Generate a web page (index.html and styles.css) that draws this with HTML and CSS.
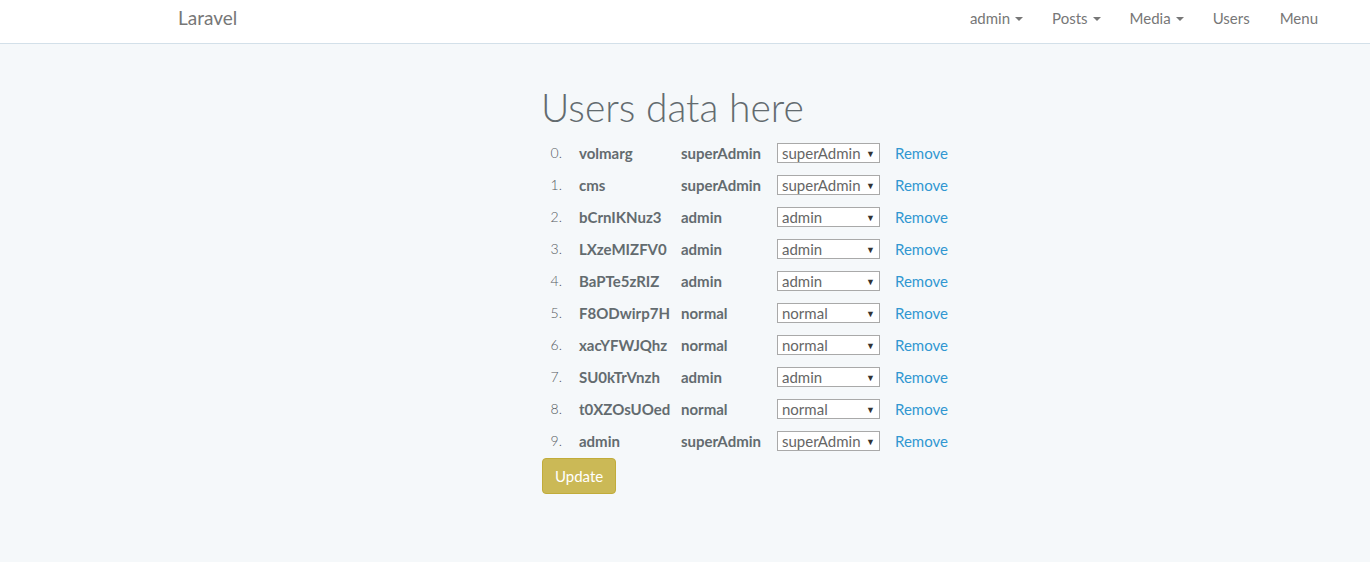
FILE: index.html
```html
<!DOCTYPE html>
<html lang="en">
<head>
<meta charset="utf-8">
<title>Users</title>
<link rel="stylesheet" href="styles.css">
</head>
<body>
<nav class="navbar">
  <div class="nav-inner">
    <a class="brand" href="#">Laravel</a>
    <ul class="nav-links">
      <li><a href="#">admin <span class="caret"></span></a></li>
      <li><a href="#">Posts <span class="caret"></span></a></li>
      <li><a href="#">Media <span class="caret"></span></a></li>
      <li><a href="#">Users</a></li>
      <li><a href="#">Menu</a></li>
    </ul>
  </div>
</nav>
<main class="content">
  <h1 class="title">Users data here</h1>
  <ol class="users">
    <li class="row"><span class="num">0.</span><span class="name">volmarg</span><span class="role">superAdmin</span><span class="sel"><span class="sel-text">superAdmin</span><span class="arrow">▼</span></span><a class="remove" href="#">Remove</a></li>
    <li class="row"><span class="num">1.</span><span class="name">cms</span><span class="role">superAdmin</span><span class="sel"><span class="sel-text">superAdmin</span><span class="arrow">▼</span></span><a class="remove" href="#">Remove</a></li>
    <li class="row"><span class="num">2.</span><span class="name">bCrnIKNuz3</span><span class="role">admin</span><span class="sel"><span class="sel-text">admin</span><span class="arrow">▼</span></span><a class="remove" href="#">Remove</a></li>
    <li class="row"><span class="num">3.</span><span class="name">LXzeMIZFV0</span><span class="role">admin</span><span class="sel"><span class="sel-text">admin</span><span class="arrow">▼</span></span><a class="remove" href="#">Remove</a></li>
    <li class="row"><span class="num">4.</span><span class="name">BaPTe5zRIZ</span><span class="role">admin</span><span class="sel"><span class="sel-text">admin</span><span class="arrow">▼</span></span><a class="remove" href="#">Remove</a></li>
    <li class="row"><span class="num">5.</span><span class="name">F8ODwirp7H</span><span class="role">normal</span><span class="sel"><span class="sel-text">normal</span><span class="arrow">▼</span></span><a class="remove" href="#">Remove</a></li>
    <li class="row"><span class="num">6.</span><span class="name">xacYFWJQhz</span><span class="role">normal</span><span class="sel"><span class="sel-text">normal</span><span class="arrow">▼</span></span><a class="remove" href="#">Remove</a></li>
    <li class="row"><span class="num">7.</span><span class="name">SU0kTrVnzh</span><span class="role">admin</span><span class="sel"><span class="sel-text">admin</span><span class="arrow">▼</span></span><a class="remove" href="#">Remove</a></li>
    <li class="row"><span class="num">8.</span><span class="name">t0XZOsUOed</span><span class="role">normal</span><span class="sel"><span class="sel-text">normal</span><span class="arrow">▼</span></span><a class="remove" href="#">Remove</a></li>
    <li class="row"><span class="num">9.</span><span class="name">admin</span><span class="role">superAdmin</span><span class="sel"><span class="sel-text">superAdmin</span><span class="arrow">▼</span></span><a class="remove" href="#">Remove</a></li>
  </ol>
  <button class="btn-update" type="button">Update</button>
</main>
</body>
</html>
```
FILE: styles.css
```css
* { box-sizing: border-box; }
html, body { margin: 0; padding: 0; }
body {
  background: #f5f8fa;
  color: #636b6f;
  font-family: Lato, "Open Sans", sans-serif;
  font-size: 15px;
  font-weight: 300;
  line-height: 1.6;
  height: 562px;
  overflow: hidden;
}
a { text-decoration: none; }

.navbar {
  background: #fff;
  border-bottom: 1px solid #d3e0e9;
  height: 44px;
}
.nav-inner {
  margin-left: 178px;
  width: 1140px;
  height: 43px;
  display: flex;
  align-items: center;
  justify-content: space-between;
}
.brand {
  color: #777;
  font-size: 19px;
  font-weight: 400;
  line-height: 1;
  padding-bottom: 8px;
}
.nav-links {
  list-style: none;
  margin: 0 -15px 0 0;
  padding: 0;
  display: flex;
  height: 100%;
}
.nav-links li a {
  display: flex;
  align-items: center;
  height: 100%;
  padding: 0 15px 8px;
  color: #777;
  font-size: 15px;
  font-weight: 400;
}
.caret {
  display: inline-block;
  width: 0;
  height: 0;
  margin-left: 5px;
  margin-right: -1px;
  margin-top: 2px;
  border-top: 4px solid #777;
  border-left: 4px solid transparent;
  border-right: 4px solid transparent;
}

.content {
  margin-left: 539px;
  width: 460px;
}
.title {
  font-size: 39px;
  font-weight: 300;
  line-height: 40px;
  margin: 43px 0 10px 2px;
  color: #636b6f;
}
.users {
  list-style: none;
  margin: 0;
  padding: 0;
}
.row {
  display: grid;
  grid-template-columns: 24px 118px 96px 103px auto;
  align-items: center;
  height: 32px;
}
.num {
  text-align: right;
  padding-right: 1px;
  font-size: 14px;
  font-weight: 300;
  color: #555b5f;
}
.name, .role {
  font-weight: 700;
  font-size: 15px;
}
.name { padding-left: 16px; }
.sel {
  display: flex;
  align-items: center;
  justify-content: space-between;
  height: 20px;
  border: 1px solid #a9a9a9;
  background: #fff;
  padding: 0 4px 0 4px;
  font-size: 15px;
  font-weight: 400;
  color: #666;
  line-height: 1;
}
.arrow {
  font-size: 9px;
  color: #333;
}
.remove {
  color: #3097d1;
  padding-left: 15px;
  font-size: 15px;
  font-weight: 400;
}
.btn-update {
  margin-top: 1px;
  margin-left: 3px;
  height: 36px;
  padding: 0 12px;
  background: #cbb956;
  border: 1px solid #c1ac3a;
  border-radius: 4px;
  color: #fff;
  font-family: inherit;
  font-size: 15px;
  font-weight: 400;
}
```
